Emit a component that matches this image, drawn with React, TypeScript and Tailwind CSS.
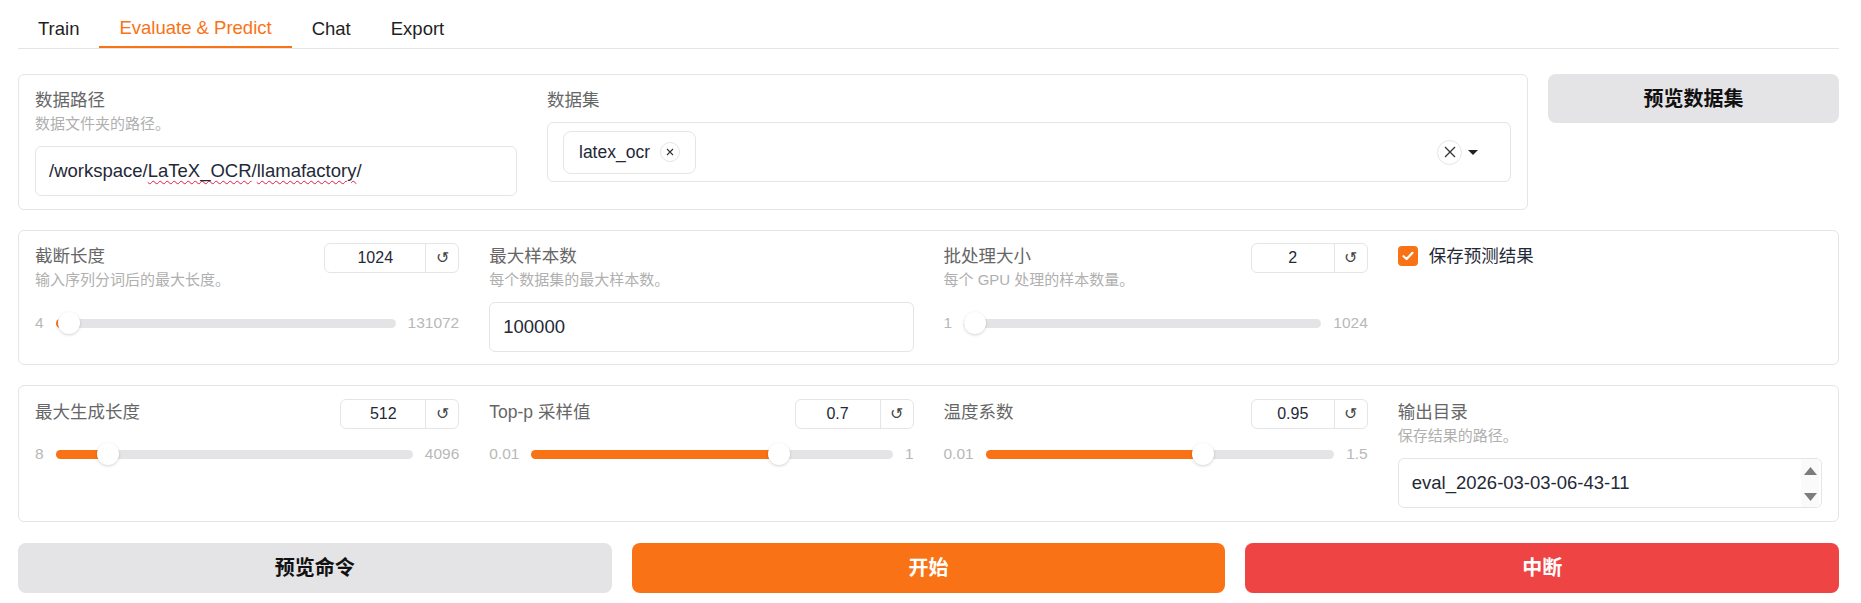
import type { ReactNode } from 'react'

const SANS = "font-['Liberation_Sans','Noto_Sans_CJK_SC',sans-serif]"

function Label({ children }: { children: ReactNode }) {
  return <p className="text-[17.5px] leading-[26px] text-[#666]">{children}</p>
}

function Info({ children }: { children: ReactNode }) {
  return <p className="text-[15px] leading-[22px] text-[#b0b0b0]">{children}</p>
}

function Panel({ className = '', children }: { className?: string; children: ReactNode }) {
  return <div className={`rounded-[6px] border border-[#e5e5e5] bg-white px-4 ${className}`}>{children}</div>
}

function NumberBox({ value, width }: { value: string; width: string }) {
  return (
    <div className={`-mb-1 flex h-[30px] shrink-0 rounded-[6px] border border-[#e5e5e5] ${width}`}>
      <span className="flex flex-1 items-center justify-center text-[16px] text-[#1f2937]">{value}</span>
      <span className="flex w-[33px] items-center justify-center border-l border-[#e5e5e5] text-[16px] text-[#444]">↺</span>
    </div>
  )
}

function Slider({ min, max, value, lo, hi, className = '' }: { min: number; max: number; value: number; lo: string; hi: string; className?: string }) {
  const p = (value - min) / (max - min)
  return (
    <div className={`flex h-[22px] items-center gap-3 ${className}`}>
      <span className="text-[15.5px] text-[#b8b8b8]">{lo}</span>
      <div className="relative h-[9px] flex-1 rounded-full bg-[#e4e4e7]">
        <div className="absolute left-0 top-0 h-full rounded-full bg-[#f97316]" style={{ width: `calc(${p} * (100% - 22px) + 11px)` }} />
        <div
          className="absolute top-[-6.5px] h-[22px] w-[22px] rounded-full bg-white shadow-[0_1px_3px_rgba(0,0,0,0.18)]"
          style={{ left: `calc(${p} * (100% - 22px))` }}
        />
      </div>
      <span className="text-[15.5px] text-[#b8b8b8]">{hi}</span>
    </div>
  )
}

function SliderField(props: {
  label: string
  info?: string
  min: number
  max: number
  value: number
  lo: string
  hi: string
  shown: string
  boxW: string
}) {
  return (
    <div>
      <div className="flex items-start justify-between">
        <Label>{props.label}</Label>
        <NumberBox value={props.shown} width={props.boxW} />
      </div>
      {props.info && <Info>{props.info}</Info>}
      <Slider min={props.min} max={props.max} value={props.value} lo={props.lo} hi={props.hi} className={props.info ? 'mt-[21px]' : 'mt-[18px]'} />
    </div>
  )
}

function TextBox({ children, className = '' }: { children: ReactNode; className?: string }) {
  return (
    <div className={`flex h-[50px] items-center rounded-[6px] border border-[#e5e5e5] px-[13px] text-[18.5px] text-[#1f2937] ${className}`}>
      {children}
    </div>
  )
}

const tabs = ['Train', 'Evaluate & Predict', 'Chat', 'Export']

export default function App() {
  return (
    <div className={`${SANS} min-h-[603px] w-[1861px] bg-white pb-[10px] pl-[18px] pr-[22px] pt-[10px]`}>
      <div className="flex border-b border-[#e5e5e5]">
        {tabs.map((t) => (
          <button
            key={t}
            className={`h-[38px] px-5 text-[18.5px] ${t === 'Evaluate & Predict' ? '-mb-px border-b-2 border-[#f97316] text-[#f97316]' : 'text-[#1f1f1f]'}`}
          >
            {t}
          </button>
        ))}
      </div>

      <div className="mt-[25px] flex flex-col gap-5">
        <div className="flex items-start gap-5">
          <Panel className="grid flex-1 grid-cols-[1fr_2fr] gap-[30px] pb-[13px] pt-3">
            <div>
              <Label>数据路径</Label>
              <Info>数据文件夹的路径。</Info>
              <TextBox className="mt-[11px]">
                /workspace/
                <span className="underline decoration-[#e11d48] decoration-wavy decoration-1 underline-offset-[3px]">LaTeX_OCR</span>/
                <span className="underline decoration-[#e11d48] decoration-wavy decoration-1 underline-offset-[3px]">llamafactory</span>/
              </TextBox>
            </div>
            <div>
              <Label>数据集</Label>
              <div className="mt-[9px] flex h-[60px] items-center rounded-[6px] border border-[#e5e5e5] pl-[15px] pr-[32px]">
                <div className="flex h-[43px] items-center gap-[10px] rounded-[8px] border border-[#e5e5e5] pl-[15px] pr-[15px]">
                  <span className="text-[17.5px] text-[#1f2937]">latex_ocr</span>
                  <span className="flex h-[20px] w-[20px] items-center justify-center rounded-full border border-[#e5e5e5]">
                    <svg width="8" height="8" viewBox="0 0 8 8" stroke="#333" strokeWidth="1.1">
                      <path d="M1 1 7 7M7 1 1 7" />
                    </svg>
                  </span>
                </div>
                <div className="flex-1" />
                <span className="flex h-[25px] w-[25px] items-center justify-center rounded-full border border-[#e5e5e5]">
                  <svg width="12" height="12" viewBox="0 0 12 12" stroke="#333" strokeWidth="1.3">
                    <path d="M1 1 11 11M11 1 1 11" />
                  </svg>
                </span>
                <svg className="ml-[6px]" width="10" height="5" viewBox="0 0 10 5">
                  <path d="M0 0h10L5 5z" fill="#222" />
                </svg>
              </div>
            </div>
          </Panel>
          <button className="h-[49px] w-[291px] rounded-[8px] bg-[#e4e4e7] text-[20px] font-bold text-[#111]">预览数据集</button>
        </div>

        <Panel className="grid grid-cols-4 gap-[30px] pb-3 pt-3">
          <SliderField label="截断长度" info="输入序列分词后的最大长度。" min={4} max={131072} value={1024} lo="4" hi="131072" shown="1024" boxW="w-[135px]" />
          <div>
            <Label>最大样本数</Label>
            <Info>每个数据集的最大样本数。</Info>
            <TextBox className="mt-[11px]">100000</TextBox>
          </div>
          <SliderField label="批处理大小" info="每个 GPU 处理的样本数量。" min={1} max={1024} value={2} lo="1" hi="1024" shown="2" boxW="w-[117px]" />
          <div className="flex h-[26px] items-center gap-[11px]">
            <span className="flex h-[20px] w-[20px] items-center justify-center rounded-[4px] bg-[#f97316]">
              <svg width="12" height="10" viewBox="0 0 12 10" fill="none" stroke="#fff" strokeWidth="2.2" strokeLinecap="round" strokeLinejoin="round">
                <path d="M1.5 5.2 4.6 8 10.5 1.8" />
              </svg>
            </span>
            <span className="text-[17.5px] text-[#1f2937]">保存预测结果</span>
          </div>
        </Panel>

        <Panel className="grid grid-cols-4 gap-[30px] pb-[13px] pt-[13px]">
          <SliderField label="最大生成长度" min={8} max={4096} value={512} lo="8" hi="4096" shown="512" boxW="w-[119px]" />
          <SliderField label="Top-p 采样值" min={0.01} max={1} value={0.7} lo="0.01" hi="1" shown="0.7" boxW="w-[119px]" />
          <SliderField label="温度系数" min={0.01} max={1.5} value={0.95} lo="0.01" hi="1.5" shown="0.95" boxW="w-[117px]" />
          <div>
            <Label>输出目录</Label>
            <Info>保存结果的路径。</Info>
            <TextBox className="mt-[11px] pr-[2px]">
              <span className="flex-1">eval_2026-03-03-06-43-11</span>
              <div className="flex h-full w-[18px] flex-col items-center justify-between bg-[#fafafa] pb-[6px] pt-[8px]">
                <svg width="13" height="8" viewBox="0 0 13 8">
                  <path d="M6.5 0 13 8H0z" fill="#7c7c7c" />
                </svg>
                <svg width="13" height="8" viewBox="0 0 13 8">
                  <path d="M0 0h13L6.5 8z" fill="#7c7c7c" />
                </svg>
              </div>
            </TextBox>
          </div>
        </Panel>

        <div className="mt-px grid h-[50px] grid-cols-3 gap-5">
          <button className="rounded-[8px] bg-[#e4e4e7] text-[20px] font-bold text-[#111]">预览命令</button>
          <button className="rounded-[8px] bg-[#f97316] text-[20px] font-bold text-white">开始</button>
          <button className="rounded-[8px] bg-[#ef4444] text-[20px] font-bold text-white">中断</button>
        </div>
      </div>
    </div>
  )
}
